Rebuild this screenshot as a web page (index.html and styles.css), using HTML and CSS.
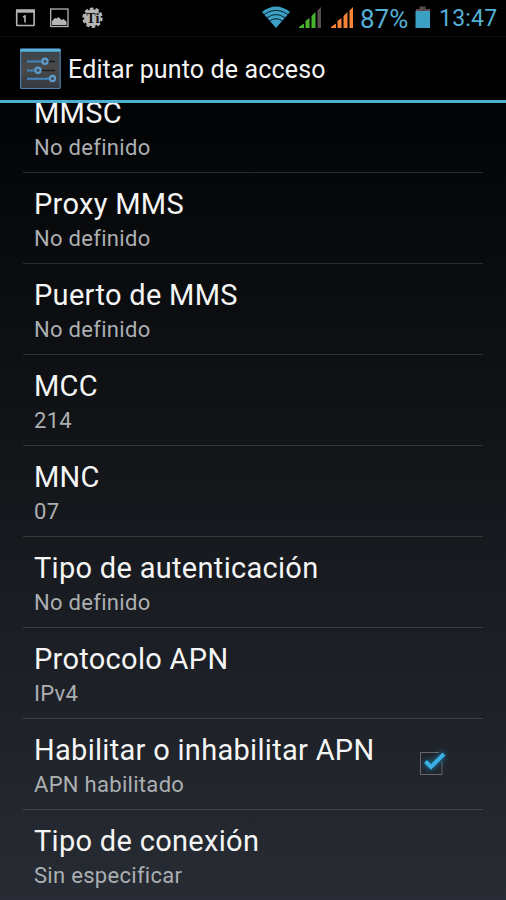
FILE: index.html
```html
<!DOCTYPE html>
<html lang="es">
<head>
<meta charset="utf-8">
<title>Editar punto de acceso</title>
<link rel="stylesheet" href="styles.css">
</head>
<body>
<div class="screen">
  <div class="status">
    <svg class="notifications" width="110" height="36" viewBox="0 0 110 36">
      <g fill="none" stroke="#b5b5b5">
        <rect x="16.7" y="10.5" width="17.4" height="15" stroke-width="1.6" rx=".5"/>
        <path d="M16 11h19" stroke-width="3.4"/>
        <path d="M23 17l2-1v6.5" stroke-width="1.6"/>
        <rect x="50.7" y="9" width="17.3" height="17.5" stroke-width="1.3"/>
      </g>
      <path d="M52 25v-4l3-3 2 .5 1.500-1.500 3 3 2-1 3 2.500V25z" fill="#b5b5b5"/>
      <circle cx="92.500" cy="17.700" r="8.500" fill="#b5b5b5"/>
      <circle cx="92.500" cy="17.700" r="9" fill="none" stroke="#b5b5b5" stroke-width="2.400" stroke-dasharray="3.500 2.155"/>
      <text class="ti" x="92.800" y="22.800" text-anchor="middle">Ti</text>
    </svg>
    <div class="system">
      <svg width="30" height="36" viewBox="0 0 30 36">
        <path d="M1 12Q15 1 29 12L15 28z" fill="#3c9fc4"/>
        <path d="M3 14.500Q15 6 27 14.500M6 17.800Q15 11.200 24 17.800M8.500 21Q15 16.500 21.500 21" fill="none" stroke="#06202c" stroke-width="1"/>
      </svg>
      <svg class="signal" width="24" height="36" viewBox="0 0 24 36">
        <path d="M0 28v-1l5-3.500V28zM6.500 28v-7l4-3v10zM12.500 28V16l4-4v16z" fill="#48b32e"/>
        <path d="M18.500 28V10.500l3.500-3.500v21z" fill="#58504f"/>
      </svg>
      <svg class="signal" width="24" height="36" viewBox="0 0 24 36">
        <path d="M0 28v-1l5-3.500V28zM6.500 28v-7l4-3v10zM12.500 28V16l4-4v16zM18.500 28V10.500l3.500-3.500v21z" fill="#f58436"/>
      </svg>
      <span class="percent">87%</span>
      <svg class="battery" width="16" height="36" viewBox="0 0 16 36">
        <path d="M1 9h3.500V6.500h6V9H15v2H1z" fill="#5c4b4b"/>
        <path d="M.5 11h14.500v17H.5z" fill="#3c9fc4"/>
      </svg>
      <span class="clock">13:47</span>
    </div>
  </div>
  <header class="bar">
    <svg width="41" height="42" viewBox="0 0 41 42">
      <defs><linearGradient id="tile" x2="0" y2="1"><stop stop-color="#3b444b"/><stop offset=".5" stop-color="#494949"/><stop offset="1" stop-color="#343a41"/></linearGradient></defs>
      <rect x=".6" y="1" width="39.600" height="39.500" rx="1" fill="url(#tile)" stroke="#4a7fae" stroke-width="1.200"/>
      <path d="M.5 2.300h40" stroke="#58b0dc" stroke-width="3"/>
      <g fill="none" stroke-width="1.500">
        <path d="M28 13.500h7M20 22.500h15" stroke="#191c20"/>
        <path d="M7 13.500h15M7 22.500h8M7 30.800h22" stroke="#4386bd" stroke-width="1.900"/>
        <g stroke="#5b9ccc" stroke-width="2.200"><circle cx="25" cy="13.300" r="2.600"/><circle cx="18" cy="22.300" r="2.600"/><circle cx="32.500" cy="30.500" r="2.600"/></g>
      </g>
    </svg>
    <h1>Editar punto de acceso</h1>
  </header>
  <main class="list">
    <div class="row"><div class="title">MMSC</div><div class="summary">No definido</div></div>
    <div class="row"><div class="title">Proxy MMS</div><div class="summary">No definido</div></div>
    <div class="row"><div class="title">Puerto de MMS</div><div class="summary">No definido</div></div>
    <div class="row"><div class="title">MCC</div><div class="summary">214</div></div>
    <div class="row"><div class="title">MNC</div><div class="summary">07</div></div>
    <div class="row"><div class="title">Tipo de autenticación</div><div class="summary">No definido</div></div>
    <div class="row"><div class="title">Protocolo APN</div><div class="summary">IPv4</div></div>
    <div class="row with-check">
      <div><div class="title">Habilitar o inhabilitar APN</div><div class="summary">APN habilitado</div></div>
      <svg class="check" width="34" height="34" viewBox="0 0 34 34">
        <path d="M24 5.500H5.500V27.500H27V14" fill="none" stroke="#69666d"/>
        <path class="tick" d="M10.500 14.500l5.500 5.500L29 7" fill="none" stroke="#38b0e4" stroke-width="4"/>
      </svg>
    </div>
    <div class="row"><div class="title">Tipo de conexión</div><div class="summary">Sin especificar</div></div>
  </main>
</div>
</body>
</html>
```
FILE: styles.css
```css
* { box-sizing: border-box; }
body { margin: 0; background: #000; }
.screen {
  width: 506px;
  height: 900px;
  display: flex;
  flex-direction: column;
  overflow: hidden;
  font-family: Roboto, "Noto Sans", sans-serif;
  color: #f5f5f5;
  background: linear-gradient(#000 0, #020304 100px, #272b33 900px);
}
svg { display: block; flex: none; }
.status {
  height: 37px;
  flex: none;
  display: flex;
  justify-content: space-between;
  background: #000;
  border-bottom: 1px solid #0c0c0c;
}
.ti { font: bold 14px "Liberation Serif", serif; fill: #111; }
.system {
  display: flex;
  width: 245px;
  color: #55b0d5;
  line-height: 37px;
  white-space: nowrap;
}
.signal { margin-left: 8px; }
.percent { width: 54px; margin-left: 5px; font-size: 26px; line-height: 38px; }
.battery { margin-left: 1px; }
.clock { margin-left: 8px; font-size: 23px; letter-spacing: 0.2px; }
.bar {
  height: 66px;
  flex: none;
  display: flex;
  align-items: center;
  gap: 7px;
  padding: 0 0 0 20px;
  background: #000;
  border-bottom: 3px solid #4fb0d2;
}
h1 { margin: 3px 0 0; font-size: 25px; font-weight: 400; line-height: 30px; letter-spacing: 0.15px; }
.list { flex: 1; min-height: 0; overflow: hidden; padding: 0 23px; }
.row {
  height: 91px;
  padding: 14px 11px 0;
  border-bottom: 1px solid rgba(255, 255, 255, 0.14);
}
.row:first-child { margin-top: -21px; }
.row:last-child { border-bottom: 0; }
.title { font-size: 29px; line-height: 34px; letter-spacing: 0.3px; white-space: nowrap; }
.summary { font-size: 22px; line-height: 26px; margin-top: 5px; letter-spacing: 0.3px; color: #acafb2; white-space: nowrap; }
.with-check { display: flex; justify-content: space-between; }
.check { margin: 14px 23px 0 0; }
.tick { filter: drop-shadow(0 0 3px #1689bd); }
```
